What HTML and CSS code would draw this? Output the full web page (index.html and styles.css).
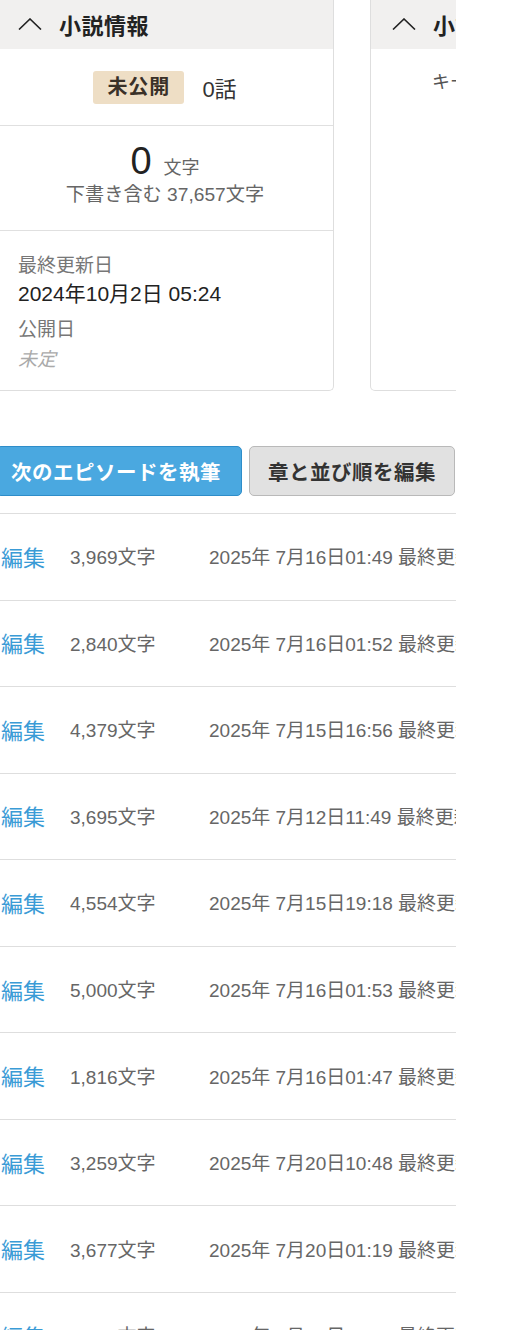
FILE: index.html
```html
<!DOCTYPE html>
<html lang="ja">
<head>
<meta charset="utf-8">
<title>小説情報</title>
<link rel="stylesheet" href="styles.css">
</head>
<body>
<div class="clip">
  <div class="content">
    <div class="cards">
      <section class="card">
        <header class="card-head">
          <svg class="chev" width="24" height="12" viewBox="0 0 24 12"><polyline points="1,11.5 12,1 23,11.5" fill="none" stroke="#222" stroke-width="1.6"/></svg>
          <h2 class="card-title">小説情報</h2>
        </header>
        <div class="row status-row">
          <span class="badge">未公開</span>
          <span class="ep-count">0話</span>
        </div>
        <div class="row chars-row">
          <div class="chars-main"><span class="big-num">0</span><span class="unit">文字</span></div>
          <div class="chars-sub">下書き含む 37,657文字</div>
        </div>
        <div class="row dates-row">
          <div class="label">最終更新日</div>
          <div class="value">2024年10月2日 05:24</div>
          <div class="label label-2">公開日</div>
          <div class="value-muted">未定</div>
        </div>
      </section>
      <section class="card card-right">
        <header class="card-head">
          <svg class="chev" width="24" height="12" viewBox="0 0 24 12"><polyline points="1,11.5 12,1 23,11.5" fill="none" stroke="#222" stroke-width="1.6"/></svg>
          <h2 class="card-title">小説設定</h2>
        </header>
        <div class="keyword">キーワード未設定</div>
      </section>
    </div>

    <div class="actions">
      <button class="btn btn-primary">次のエピソードを執筆</button>
      <button class="btn btn-secondary">章と並び順を編集</button>
    </div>

    <ul class="episodes">
      <li class="ep"><a class="edit">編集</a><span class="count">3,969文字</span><span class="date">2025年 7月16日01:49 最終更新</span></li>
      <li class="ep"><a class="edit">編集</a><span class="count">2,840文字</span><span class="date">2025年 7月16日01:52 最終更新</span></li>
      <li class="ep"><a class="edit">編集</a><span class="count">4,379文字</span><span class="date">2025年 7月15日16:56 最終更新</span></li>
      <li class="ep"><a class="edit">編集</a><span class="count">3,695文字</span><span class="date">2025年 7月12日11:49 最終更新</span></li>
      <li class="ep"><a class="edit">編集</a><span class="count">4,554文字</span><span class="date">2025年 7月15日19:18 最終更新</span></li>
      <li class="ep"><a class="edit">編集</a><span class="count">5,000文字</span><span class="date">2025年 7月16日01:53 最終更新</span></li>
      <li class="ep"><a class="edit">編集</a><span class="count">1,816文字</span><span class="date">2025年 7月16日01:47 最終更新</span></li>
      <li class="ep"><a class="edit">編集</a><span class="count">3,259文字</span><span class="date">2025年 7月20日10:48 最終更新</span></li>
      <li class="ep"><a class="edit">編集</a><span class="count">3,677文字</span><span class="date">2025年 7月20日01:19 最終更新</span></li>
      <li class="ep"><a class="edit">編集</a><span class="count">3,533文字</span><span class="date">2025年 7月20日10:33 最終更新</span></li>
    </ul>
  </div>
</div>
</body>
</html>
```

FILE: styles.css
```css
* { box-sizing: border-box; }
html, body { margin: 0; padding: 0; background: #fff; }
body {
  font-family: "Liberation Sans", "Noto Sans CJK JP", sans-serif;
  color: #222;
  width: 513px;
  height: 1330px;
  overflow: hidden;
}
.clip {
  width: 456px;
  overflow: hidden;
}
.content {
  margin-left: -4px;
  width: 460px;
}
.cards {
  display: flex;
  gap: 36px;
  width: 712px;
}
.card {
  width: 338px;
  flex: none;
  border: 1px solid #dedede;
  border-top: none;
  border-radius: 0 0 5px 5px;
  display: flex;
  flex-direction: column;
}
.card-head {
  height: 49px;
  background: #f1f0ef;
  display: flex;
  align-items: center;
  padding: 0 0 2px 21px;
}
.chev { display: block; margin-right: 17px; }
.card-title {
  margin: 0;
  font-size: 22px;
  font-weight: bold;
  color: #222;
  letter-spacing: 0.5px;
}
.row { border-bottom: 1px solid #e0e0e0; }
.status-row {
  height: 77px;
  display: flex;
  align-items: center;
  justify-content: center;
  gap: 18px;
}
.badge {
  background: #eedec5;
  border-radius: 3px;
  height: 33px;
  line-height: 33px;
  padding: 0 14px;
  font-size: 20px;
  font-weight: bold;
  color: #3a3128;
  letter-spacing: 1px;
}
.ep-count { font-size: 22px; color: #333; }
.chars-row {
  padding: 15px 0 21px;
  text-align: center;
}
.chars-main { line-height: 40px; height: 40px; }
.big-num { font-size: 38px; color: #222; margin-right: 12px; }
.unit { font-size: 18px; color: #666; }
.chars-sub { font-size: 19.2px; line-height: 28px; color: #666; }
.dates-row {
  border-bottom: none;
  padding: 21px 0 16px 21px;
  flex: 1;
}
.label { font-size: 19px; line-height: 28px; color: #777; }
.label-2 { margin-top: 8px; }
.value { font-size: 21px; line-height: 28px; color: #222; }
.value-muted { font-size: 19px; line-height: 28px; color: #aaa; font-style: italic; margin-top: 2px; }
.keyword {
  padding: 21px 0 0 61px;
  font-size: 18px;
  line-height: 24px;
  color: #555;
  white-space: nowrap;
}
.actions {
  margin-top: 55px;
  display: flex;
  gap: 7px;
}
.btn {
  height: 50px;
  border-radius: 5px;
  font-family: inherit;
  font-size: 20.5px;
  font-weight: bold;
  letter-spacing: 0.5px;
  padding: 0;
  cursor: pointer;
}
.btn-primary {
  width: 246px;
  background: #4aa8e0;
  border: 1px solid #2e8dc9;
  color: #fff;
  text-align: left;
  padding-left: 14px;
}
.btn-secondary {
  width: 206px;
  background: #e1e1e1;
  border: 1px solid #b9b9b9;
  color: #333;
}
.episodes {
  list-style: none;
  margin: 17px 0 0;
  padding: 0;
  border-top: 1px solid #dedede;
}
.ep {
  height: 86.56px;
  border-bottom: 1px solid #dedede;
  display: flex;
  align-items: center;
  white-space: nowrap;
  overflow: hidden;
  padding-bottom: 2px;
}
.edit {
  font-size: 22px;
  color: #3a9bd6;
  width: 74px;
  padding-left: 5px;
  flex: none;
}
.count {
  font-size: 19px;
  color: #666;
  width: 139px;
  flex: none;
}
.date {
  font-size: 19px;
  color: #666;
}
```
